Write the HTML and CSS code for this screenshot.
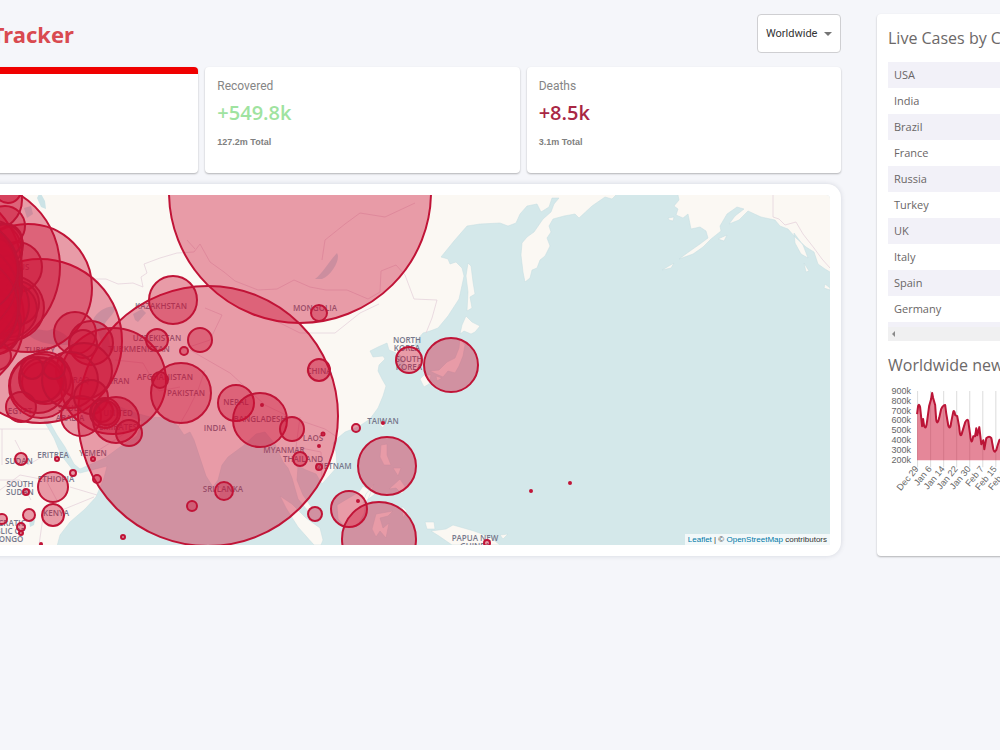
FILE: index.html
```html
<!DOCTYPE html>
<html lang="en">
<head>
<meta charset="utf-8">
<title>COVID-19 Tracker</title>
<link rel="stylesheet" href="styles.css">
</head>
<body>
<div class="viewport">
<div class="app">
  <main class="main">
    <header class="header">
      <h1 class="title">COVID-19 Tracker</h1>
      <div class="picker">
        <select class="picker-select" aria-label="Country"><option>Worldwide</option></select>
        <svg class="picker-arrow" viewBox="0 0 8 4" aria-hidden="true"><path d="M0 0h8L4 4z"/></svg>
      </div>
    </header>

    <section class="stats">
      <article class="card stat stat-active"></article>
      <article class="card stat">
        <h2 class="stat-name">Recovered</h2>
        <p class="stat-value recovered">+549.8k</p>
        <p class="stat-total">127.2m Total</p>
      </article>
      <article class="card stat">
        <h2 class="stat-name">Deaths</h2>
        <p class="stat-value deaths">+8.5k</p>
        <p class="stat-total">3.1m Total</p>
      </article>
    </section>

    <section class="map-card">
      <div class="map">
        <svg class="map-svg" viewBox="-105 195 935 350" preserveAspectRatio="xMaxYMin slice" role="img" aria-label="Map of cases">
          <g class="land">
            <path d="M-120 190H618L616 195 612 199 605 197 592 206 579 218 575 214 564 216 553 219 549 226 551 232 547 238 550 246 545 256 540 260 537 268 532 270 530 278 525 282 523 272 521 255 522 243 527 237 534 232 543 219 551 212 554 204 559 198 552 198 549 207 541 212 537 204 527 206 520 214 516 223 508 226 500 223 480 224 467 226 454 241 441 257 448 259 450 264 456 262 462 268 464 276 461 290 459 299 448 316 438 328 430 331 423 333 417 340 415 345 420 355 422 366 412 372 405 371 404 362 400 355 394 352 389 350 387 343 378 347 370 351 373 357 383 356 385 359 379 365 378 371 382 379 386 386 383 396 378 408 370 419 358 427 345 432 339 437 333 443 336 452 337 467 330 475 322 484 316 474 306 470 298 466 297 480 303 495 312 508 308 511 298 499 292 478 288 468 283 462 275 444 265 432 256 434 243 446 228 457 222 465 218 480 213 487 206 476 199 455 194 440 190 432 184 435 178 426 168 418 150 417 132 412 118 406 125 414 142 421 137 436 120 447 105 458 80 469 74 464 65 447 57 435 49 421 44 421 54 438 61 455 72 469 80 473 107 466 104 478 96 497 85 509 70 522 60 535 56 550H-120z"/>
            <path d="M468 263L471 266 473 282 475 294 470 297 472 308 467 311 468 292 466 276zM466 316L472 322 480 326 475 332 471 334 464 331 460 334 462 325zM460 338L465 345 463 356 459 366 455 373 448 371 443 377 436 374 430 371 439 370 447 362 455 358 459 348zM424 375L431 375 429 384 424 387 420 379zM436 376L442 378 437 381zM382 421L386 421 383 428 380 425zM381 445L387 444 387 455 391 465 384 465 380 457zM389 489L400 479 406 488 402 494 396 488zM393 468L401 468 398 476zM366 494L374 484 367 502 363 503zM280 496L292 504 306 518 320 528 323 540 321 545H314L298 527 286 508zM337 505L347 499 359 492 363 486 375 494 366 501 364 514 357 526 345 527 338 519zM376 514L393 511 388 516 380 518 383 528 389 523 386 538 380 531 376 537 372 529zM402 506L407 511 403 518zM425 522L434 522 435 529 427 529zM431 531L446 529 453 525 474 531 490 537 500 545H452L439 536zM500 535L508 534 503 539zM216 485L222 489 219 497 215 493z"/>
            <path d="M677 190L679 200 674 206 678 209 676 215 683 218 688 214 691 229 700 227 706 231 708 238 700 244 690 251 679 259 693 254 703 247 711 239 721 231 720 226 727 214 737 207 744 209 735 216 729 224 739 220 744 215 748 211 761 217 775 220 780 226 788 229 796 238 806 247 814 252 818 264 825 269 835 275V190zM668 218L674 217 673 221 669 220zM662 270L674 263 671 268zM718 239L727 235 724 241zM825 284L830 288V290L824 288zM804 263L809 271 806 272zM794 233L803 245 808 258 801 254 795 243z"/>
          </g>
          <g class="water">
            <path d="M28 334C36 324 43 334 52 329 65 332 69 338 75 344 60 347 36 344 28 334zM93 320C97 311 108 305 116 307 114 316 103 321 104 328 110 333 108 342 112 350 106 359 100 352 102 343zM315 279C323 273 327 264 337 253 341 259 332 275 322 279zM133 314L142 309 146 313 138 322 135 320zM37 198l3-6 5 9 1 8-5-2zM24 208l7-2 2 8-6 4zM29 521l6-1-1 5-4 2zM105 397l6 5 9 8-3 3-10-8z"/>
          </g>
          <g class="borders">
            <path d="M93 279L106 279 118 284 133 283 143 287 141 277 147 273 144 264 160 258 177 253 194 252 200 244 210 262 224 272 235 281 258 290 277 289 294 280 310 287 326 290 347 290 368 299 380 292 381 271 396 265 405 275 414 299 437 300 432 318 426 333M278 322L300 333 335 333 360 313 379 304M195 249L187 240M322 260L325 240 345 224 360 213 385 217 415 203M190 350L230 373 265 405 290 417 325 429 337 437M205 370L198 390 188 410 178 427M0 429H49M2 429V465M0 490L20 475 46 480 62 510 94 497M70 487L97 495M28 330L5 315M180 350L210 340 222 315 205 308M300 417L296 447 321 452 322 480M15 440L28 465 45 455M0 480L20 480 31 500M44 510L39 545M122 408L124 434 99 450M115 360L143 363 159 391 180 387M773 195V217L779 219 785 225 796 222 803 234 814 248 822 259 830 268"/>
          </g>
          <g class="labels">
            <text x="161" y="309">KAZAKHSTAN</text><text x="157" y="341">UZBEKISTAN</text><text x="139" y="352">TURKMENISTAN</text>
            <text x="315" y="311">MONGOLIA</text><text x="319" y="374">CHINA</text><text x="407" y="343">NORTH</text><text x="407" y="351">KOREA</text>
            <text x="409" y="362">SOUTH</text><text x="409" y="370">KOREA</text><text x="165" y="380">AFGHANISTAN</text><text x="186" y="396">PAKISTAN</text>
            <text x="215" y="431">INDIA</text><text x="236" y="405">NEPAL</text><text x="260" y="422">BANGLADESH</text><text x="313" y="441">LAOS</text>
            <text x="284" y="453">MYANMAR</text><text x="303" y="462">THAILAND</text><text x="334" y="469">VIETNAM</text><text x="383" y="424">TAIWAN</text>
            <text x="223" y="492">SRI LANKA</text><text x="475" y="541">PAPUA NEW</text><text x="475" y="549">GUINEA</text>
            <text x="120" y="384">IRAN</text><text x="80" y="383">IRAQ</text><text x="40" y="353">TURKEY</text><text x="12" y="270">BELARUS</text>
            <text x="20" y="414">EGYPT</text><text x="70" y="411">SAUDI</text><text x="70" y="421">ARABIA</text><text x="118" y="416">UNITED</text><text x="118" y="430">EMIRATES</text>
            <text x="53" y="458">ERITREA</text><text x="93" y="456">YEMEN</text><text x="19" y="464">SUDAN</text><text x="56" y="482">ETHIOPIA</text>
            <text x="20" y="487">SOUTH</text><text x="20" y="495">SUDAN</text><text x="56" y="516">KENYA</text>
            <text x="0" y="526">DEMOCRATIC</text><text x="0" y="534">REPUBLIC OF</text><text x="0" y="542">THE CONGO</text>
          </g>
          <g class="cases">
            <circle cx="300" cy="192" r="131"/><circle cx="208" cy="416" r="130"/><circle cx="40" cy="341" r="82"/><circle cx="28" cy="288" r="64"/>
            <circle cx="-25" cy="267" r="85"/><circle cx="-62" cy="270" r="84"/><circle cx="-50" cy="320" r="74"/><circle cx="113" cy="381" r="53"/>
            <circle cx="5" cy="226" r="20"/><circle cx="8" cy="190" r="13"/><circle cx="-8" cy="200" r="30"/><circle cx="17" cy="267" r="25"/>
            <circle cx="12" cy="308" r="32"/><circle cx="17" cy="303" r="22"/><circle cx="10" cy="310" r="27"/><circle cx="-10" cy="252" r="32"/>
            <circle cx="2" cy="245" r="21"/><circle cx="-8" cy="278" r="30"/><circle cx="-4" cy="305" r="33"/><circle cx="-12" cy="323" r="33"/>
            <circle cx="-4" cy="330" r="24"/><circle cx="0" cy="290" r="22"/><circle cx="-16" cy="285" r="38"/><circle cx="-20" cy="305" r="39"/>
            <circle cx="6" cy="240" r="16"/><circle cx="-3" cy="356" r="14"/><circle cx="-10" cy="265" r="28"/><circle cx="-3" cy="315" r="20"/>
            <circle cx="-50" cy="285" r="71"/><circle cx="-40" cy="300" r="60"/><circle cx="-45" cy="275" r="63"/><circle cx="-34" cy="308" r="52"/><circle cx="-28" cy="268" r="46"/>
            <circle cx="75" cy="333" r="21"/><circle cx="91" cy="343" r="22"/><circle cx="83" cy="344" r="14"/><circle cx="84" cy="371" r="28"/>
            <circle cx="41" cy="386" r="32"/><circle cx="45" cy="378" r="26"/><circle cx="42" cy="382" r="20"/>
            <circle cx="38" cy="385" r="28"/><circle cx="42" cy="380" r="22"/><circle cx="70" cy="380" r="28"/>
            <circle cx="32" cy="368" r="11"/><circle cx="54" cy="368" r="11"/><circle cx="21" cy="407" r="15"/><circle cx="81" cy="416" r="20"/>
            <circle cx="91" cy="397" r="17"/><circle cx="105" cy="413" r="15"/><circle cx="102" cy="411" r="11"/><circle cx="106" cy="413" r="12"/>
            <circle cx="116" cy="420" r="23"/><circle cx="129" cy="433" r="13"/>
            <circle cx="173" cy="300" r="24"/><circle cx="200" cy="340" r="12"/><circle cx="184" cy="351" r="4"/><circle cx="157" cy="340" r="11"/>
            <circle cx="319" cy="313" r="8"/><circle cx="319" cy="370" r="11"/><circle cx="409" cy="360" r="13"/><circle cx="451" cy="365" r="27"/>
            <circle cx="181" cy="393" r="30"/><circle cx="160" cy="380" r="8"/><circle cx="236" cy="403" r="18"/><circle cx="260" cy="420" r="27"/>
            <circle cx="292" cy="429" r="12"/><circle cx="300" cy="459" r="7"/><circle cx="319" cy="467" r="3"/><circle cx="224" cy="491" r="9"/>
            <circle cx="192" cy="506" r="5"/><circle cx="315" cy="514" r="7"/><circle cx="356" cy="428" r="4"/><circle cx="387" cy="466" r="29"/>
            <circle cx="349" cy="509" r="18"/><circle cx="379" cy="539" r="37"/><circle cx="487" cy="543" r="3"/>
            <circle cx="21" cy="459" r="6"/><circle cx="57" cy="459" r="2"/><circle cx="93" cy="459" r="2"/><circle cx="73" cy="473" r="3"/>
            <circle cx="97" cy="479" r="4"/><circle cx="53" cy="487" r="15"/><circle cx="26" cy="492" r="3"/><circle cx="53" cy="515" r="11"/>
            <circle cx="29" cy="515" r="6"/><circle cx="2" cy="519" r="5"/><circle cx="21" cy="527" r="4"/><circle cx="21" cy="533" r="2"/>
            <circle cx="41" cy="544" r="1"/><circle cx="123" cy="537" r="2"/><circle cx="323" cy="434" r="1.5"/><circle cx="319" cy="446" r="1"/>
            <circle cx="262" cy="405" r="1"/><circle cx="383" cy="423" r="1"/><circle cx="358" cy="501" r="1"/><circle cx="531" cy="491" r="1"/><circle cx="570" cy="483" r="1"/>
          </g>
        </svg>
        <div class="attribution"><a href="#leaflet">Leaflet</a> | © <a href="#osm">OpenStreetMap</a> contributors</div>
      </div>
    </section>
  </main>

  <aside class="card sidebar">
    <h2 class="side-title">Live Cases by Country</h2>
    <div class="table-box">
      <div class="table-rows">
      <table class="table">
        <tbody>
          <tr><td>USA</td></tr><tr><td>India</td></tr><tr><td>Brazil</td></tr><tr><td>France</td></tr><tr><td>Russia</td></tr>
          <tr><td>Turkey</td></tr><tr><td>UK</td></tr><tr><td>Italy</td></tr><tr><td>Spain</td></tr><tr><td>Germany</td></tr><tr><td></td></tr>
        </tbody>
      </table>
      </div>
      <div class="scrollbar"><svg class="scroll-arrow" viewBox="0 0 3 6" aria-hidden="true"><path d="M3 0v6L0 3z"/></svg></div>
    </div>
    <h2 class="side-title">Worldwide new cases</h2>
    <svg class="chart" viewBox="0 0 320 120" preserveAspectRatio="xMinYMin slice" role="img" aria-label="New cases over time">
      <path class="grid" d="M29.500 7V83M42.500 7V83M55.500 7V83M68.500 7V83M81.500 7V83M94.500 7V83M107.500 7V83M120.500 7V83"/>
      <path class="area" d="M29 76V30L30 22Q31 19 32 23L34 42 35 35 37 43 39 40 41 22 44 9 46 19 49 38 51 34 53 25 57 21 59 34 62 44 65 28 67 31 69 32 72 52 75 42 79 35 81 43 83 58 86 50 88 44 89 50 91 43 93 59 95 56 96 65 98 54 101 52 104 55 106 67 108 68 111 56 114 54 118 65 122 56V76z"/>
      <path class="line" d="M29 30L30 22Q31 19 32 23L34 42 35 35 36 42Q38 46 39 37L41 22 43 15 44 9 45 14 47 21 48 35Q49 42 51 34L53 25Q55 21 57 21L58 29 60 41Q62 47 63 38L65 28Q66 25 67 31L69 32 71 43Q72 56 74 48L77 38Q79 34 80 37L82 51Q83 63 85 52L87 52 88 44 89 51 91 43 93 60 95 56 96 65 98 54Q101 51 103 54L105 65Q107 71 109 62L111 56 114 54 118 65 122 56"/>
      <g class="y-labels">
        <text x="23" y="10">900k</text><text x="23" y="20">800k</text><text x="23" y="30">700k</text><text x="23" y="39">600k</text>
        <text x="23" y="49">500k</text><text x="23" y="59">400k</text><text x="23" y="69">300k</text><text x="23" y="79">200k</text>
      </g>
      <g class="x-labels">
        <text transform="translate(31 85) rotate(-50)">Dec 29</text><text transform="translate(44 85) rotate(-50)">Jan 6</text>
        <text transform="translate(57 85) rotate(-50)">Jan 14</text><text transform="translate(70 85) rotate(-50)">Jan 22</text>
        <text transform="translate(83 85) rotate(-50)">Jan 30</text><text transform="translate(96 85) rotate(-50)">Feb 7</text>
        <text transform="translate(109 85) rotate(-50)">Feb 15</text><text transform="translate(122 85) rotate(-50)">Feb 23</text>
      </g>
    </svg>
  </aside>
</div>
</div>
</body>
</html>
```
FILE: styles.css
```css
* { box-sizing: border-box; }
body {
  margin: 0;
  background: #f5f6fa;
  font-family: "Open Sans", "Noto Sans", sans-serif;
  color: #6a6666;
}
h1, h2, p { margin: 0; font-weight: 400; }
.viewport { min-height: 100vh; overflow: hidden; }
.app {
  display: flex;
  gap: 36px;
  margin: 0 -220px 0 -116px;
  padding-top: 14px;
}
.main { flex: 1; min-width: 0; }

.header {
  display: flex;
  align-items: center;
  justify-content: space-between;
  margin-bottom: 14px;
}
.title {
  font: 700 22px/30px "Noto Sans", "Open Sans", sans-serif;
  color: #d94a50;
}
.picker { position: relative; }
.picker-select {
  display: block;
  appearance: none;
  width: 84px;
  height: 39px;
  padding: 0 8px;
  border: 1px solid #cfcfd2;
  border-radius: 4px;
  background: #fff;
  color: #333;
  font: 11px Roboto, Arial, sans-serif;
}
.picker-arrow {
  position: absolute;
  right: 9px;
  top: 18px;
  width: 8px;
  height: 4px;
  fill: #757575;
  pointer-events: none;
}

.card {
  background: #fff;
  border-radius: 4px;
  box-shadow: 0 1px 2px rgba(0, 0, 0, 0.28);
}
.stats { display: grid; grid-template-columns: repeat(3, 1fr); gap: 7px; }
.stat { min-height: 106px; padding: 11px 12px; }
.stat-active { border-top: 7px solid #f00000; }
.stat-name { font: 12px/16px Roboto, Arial, sans-serif; color: #858585; }
.stat-value { margin: 7px 0 11px; font-size: 20px; line-height: 24px; font-weight: 600; }
.recovered { color: #9fe3a0; }
.deaths { color: #a92744; }
.stat-total { font: 700 9px/12px "Liberation Sans", Arial, sans-serif; color: #808080; }

.map-card {
  margin-top: 11px;
  padding: 11px;
  border-radius: 14px;
  background: #fff;
  box-shadow: 0 0 5px rgba(80, 90, 110, 0.2);
}
.map {
  position: relative;
  height: 350px;
  overflow: hidden;
  border-radius: 4px 4px 0 0;
  background: #d4e8ea;
}
.map-svg { display: block; width: 100%; height: 100%; }
.land { fill: #fbf8f3; stroke: #c4dde0; stroke-width: 0.5; }
.water { fill: #cce3e6; }
.borders { fill: none; stroke: #e6d3dc; stroke-width: 0.8; }
.labels {
  fill: #77788c;
  font: 600 8px "Open Sans", "Noto Sans", sans-serif;
  text-anchor: middle;
}
.cases { fill: #cc1034; fill-opacity: 0.4; stroke: #c01437; stroke-width: 2; }
.attribution {
  position: absolute;
  right: 0;
  bottom: 0;
  padding: 0 3px;
  background: rgba(255, 255, 255, 0.7);
  color: #333;
  font: 8px/11px "Liberation Sans", Arial, sans-serif;
}
.attribution a { color: #0078a8; text-decoration: none; }

.sidebar { flex: 0 0 343px; padding: 11px; }
.side-title { font-size: 16px; line-height: 26px; white-space: nowrap; color: #6c6868; }
.table-box { margin: 11px 0; height: 279px; display: flex; flex-direction: column; }
.table-rows { flex: 1; overflow: hidden; }
.table { width: 100%; border-collapse: collapse; font-size: 11px; line-height: 16px; }
.table td { height: 26px; padding: 5px 6px; }
.table tr:nth-child(odd) { background: #f2f1f8; }
.scrollbar { flex: 0 0 14px; display: flex; align-items: center; padding-left: 4px; background: #f0f0f1; }
.scroll-arrow { width: 3px; height: 6px; fill: #8a8a8a; }
.chart {
  display: block;
  width: 100%;
  height: 120px;
  margin: 6px 0 40px;
  font: 9px "Liberation Sans", Arial, sans-serif;
}
.grid { stroke: #dcdcdc; stroke-width: 1; }
.area { fill: #cc1034; fill-opacity: 0.5; }
.line { fill: none; stroke: #bb1537; stroke-width: 2; stroke-linejoin: round; }
.y-labels, .x-labels { fill: #666; text-anchor: end; }
```
